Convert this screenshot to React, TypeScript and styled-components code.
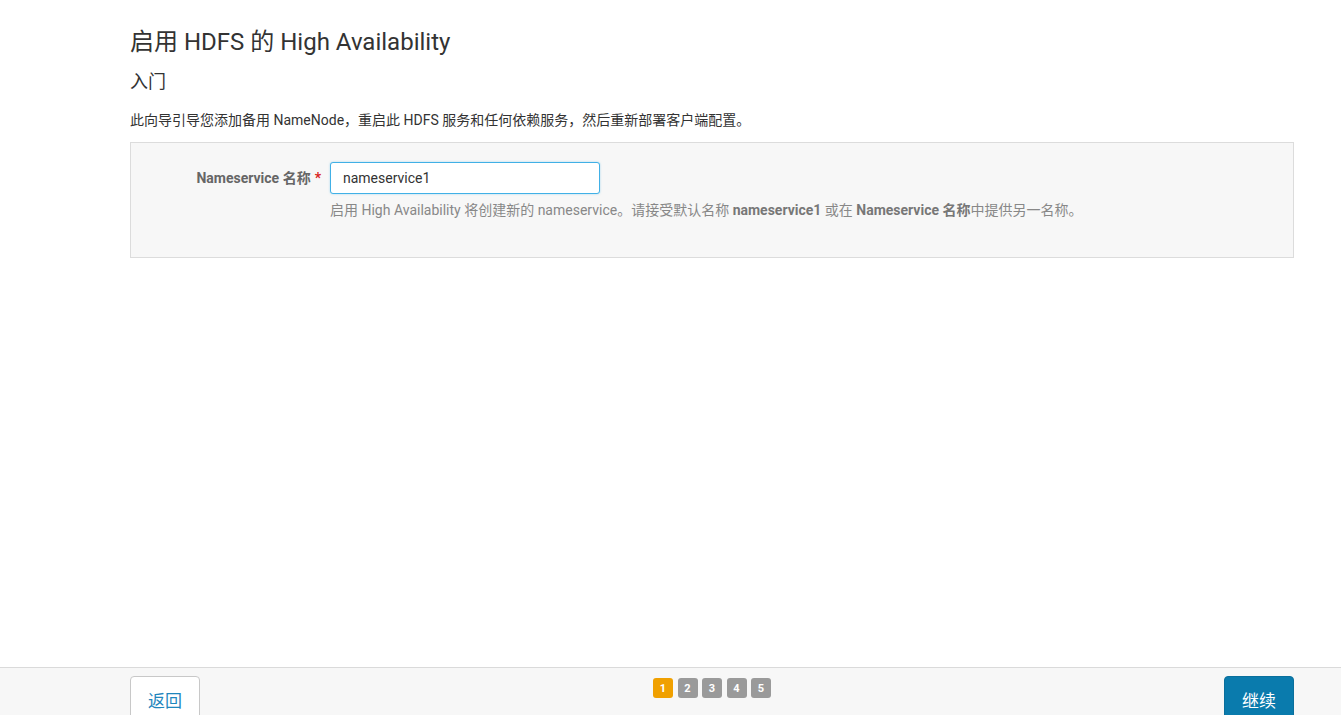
import React from "react";
import styled, { createGlobalStyle } from "styled-components";

const Global = createGlobalStyle`
  html, body { margin: 0; padding: 0; background: #fff; }
  body { font-family: Roboto, "Noto Sans CJK SC", "Liberation Sans", sans-serif; color: #333; }
`;

const Page = styled.div`
  height: 715px;
  display: flex;
  flex-direction: column;
  overflow: hidden;
`;

const Main = styled.main`
  flex: 1;
  min-height: 0;
  padding: 24px 47px 0 130px;
`;

const Title = styled.h1`
  margin: 0;
  font-size: 24px;
  font-weight: 400;
  line-height: 36px;
  color: #333;
`;

const Subtitle = styled.h2`
  margin: 7px 0 0;
  font-size: 18px;
  font-weight: 400;
  line-height: 30px;
  color: #333;
`;

const Intro = styled.p`
  margin: 13px 0 0;
  font-size: 14px;
  line-height: 20px;
  color: #333;
`;

const Panel = styled.section`
  margin-top: 12px;
  background: #f7f7f7;
  border: 1px solid #dcdcdc;
  padding: 19px 0 37px;
  display: grid;
  grid-template-columns: 190px 1fr;
  column-gap: 9px;
  row-gap: 6px;
`;

const Label = styled.label`
  text-align: right;
  font-size: 14px;
  font-weight: 700;
  color: #666;
  line-height: 32px;
`;

const Required = styled.span`
  color: #d9251d;
  margin-left: 4px;
`;

const Input = styled.input`
  box-sizing: border-box;
  width: 270px;
  height: 32px;
  padding: 0 12px;
  border: 1px solid #41b0e6;
  border-radius: 3px;
  background: #fff;
  font-family: inherit;
  font-size: 14px;
  color: #333;
  outline: none;
  box-shadow: 0 0 2px rgba(65, 176, 230, 0.5);
`;

const Help = styled.div`
  grid-column: 2;
  font-size: 14px;
  color: #888;
  line-height: 20px;
  b { color: #777; font-weight: 700; }
`;

const Footer = styled.footer`
  height: 48px;
  flex: 0 0 48px;
  min-height: 0;
  background: #f7f7f7;
  border-top: 1px solid #dadada;
  box-sizing: border-box;
  padding: 8px 47px 0 130px;
  display: flex;
  justify-content: space-between;
  align-items: flex-start;
`;

const Button = styled.button<{ $primary?: boolean }>`
  flex: none;
  width: 70px;
  height: 46px;
  border-radius: 4px;
  font-family: inherit;
  font-size: 17px;
  padding: 0;
  cursor: pointer;
  border: 1px solid ${(p) => (p.$primary ? "#0a6f9c" : "#c8c8c8")};
  background: ${(p) => (p.$primary ? "#0a7bad" : "#fff")};
  color: ${(p) => (p.$primary ? "#fff" : "#1f86bd")};
`;

const Steps = styled.div`
  display: flex;
  gap: 4.5px;
  margin-top: 2px;
`;

const Step = styled.span<{ $active?: boolean }>`
  width: 20px;
  height: 20px;
  border-radius: 3px;
  background: ${(p) => (p.$active ? "#f0a000" : "#9a9a9a")};
  color: #fff;
  font-size: 11px;
  font-weight: 700;
  display: flex;
  align-items: center;
  justify-content: center;
`;

export default function App() {
  return (
    <Page>
      <Global />
      <Main>
        <Title>启用 HDFS 的 High Availability</Title>
        <Subtitle>入门</Subtitle>
        <Intro>此向导引导您添加备用 NameNode，重启此 HDFS 服务和任何依赖服务，然后重新部署客户端配置。</Intro>
        <Panel>
          <Label htmlFor="ns">
            Nameservice 名称<Required>*</Required>
          </Label>
          <div>
            <Input id="ns" defaultValue="nameservice1" />
          </div>
          <Help>
            启用 High Availability 将创建新的 nameservice。请接受默认名称 <b>nameservice1</b> 或在 <b>Nameservice 名称</b>中提供另一名称。
          </Help>
        </Panel>
      </Main>
      <Footer>
        <Button>返回</Button>
        <Steps>
          {[1, 2, 3, 4, 5].map((n) => (
            <Step key={n} $active={n === 1}>{n}</Step>
          ))}
        </Steps>
        <Button $primary>继续</Button>
      </Footer>
    </Page>
  );
}
